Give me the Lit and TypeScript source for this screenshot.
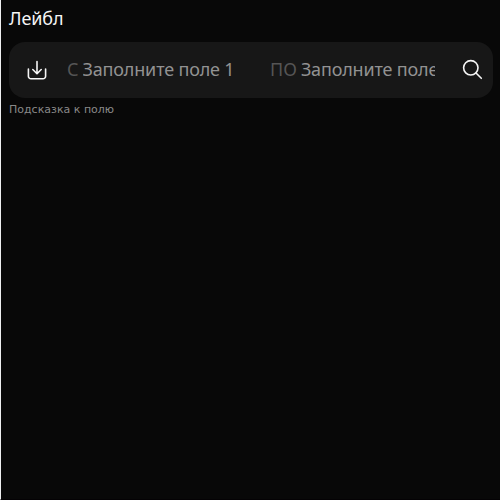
import { LitElement, html, css } from "lit";
import { customElement } from "lit/decorators.js";

@customElement("app-root")
export class AppRoot extends LitElement {
  static styles = css`
    :host {
      display: block;
      box-sizing: border-box;
      height: 500px;
      padding: 7px 7px 0 8px;
      overflow: hidden;
      background: #080808;
      border-left: 1px solid #eeeff0;
      border-bottom: 1px solid #040204;
      font-family: "Noto Sans", sans-serif;
      font-size: 18px;
      line-height: 22px;
      color: #f5f5f5;
    }
    .label { display: block; height: 22px; letter-spacing: -0.1px; }
    .range {
      display: flex;
      align-items: center;
      box-sizing: border-box;
      height: 56px;
      margin-top: 13px;
      padding: 0 8px 0 16px;
      border-radius: 16px;
      background: #171717;
    }
    .icon { display: block; flex: none; width: 24px; height: 24px; fill: none; stroke: #f5f5f5; stroke-width: 1.6; stroke-linecap: round; stroke-linejoin: round; }
    .field { display: flex; gap: 4px; overflow: hidden; white-space: nowrap; box-sizing: border-box; padding-bottom: 2px; }
    .first { width: 168px; margin-left: 18px; }
    .second { width: 165px; margin-left: 35px; }
    .prefix { color: #555555; }
    .value { color: #929292; letter-spacing: -0.17px; flex: 1; min-width: 0; overflow: hidden; }
    .search { margin-left: 26px; margin-right: -1px; }
    .hint { display: block; margin-top: 5px; font: 11px/14px "DejaVu Sans", sans-serif; color: #888888; }
  `;

  render() {
    return html`
      <label class="label">Лейбл</label>
      <div class="range">
        <svg class="icon" viewBox="0 0 24 24">
          <path d="M12 3.5v12M7.8 11.5l4.2 4.2 4.2-4.2M3.4 11v7.2a2.6 2.6 0 0 0 2.6 2.6h12a2.6 2.6 0 0 0 2.6-2.6V11" />
        </svg>
        <div class="field first"><span class="prefix">С</span><span class="value">Заполните поле 1</span></div>
        <div class="field second"><span class="prefix">ПО</span><span class="value">Заполните поле 2</span></div>
        <svg class="icon search" viewBox="0 0 24 24">
          <circle cx="9.8" cy="9.8" r="7.2" /><path d="M15 15l5.3 5.3" />
        </svg>
      </div>
      <span class="hint">Подсказка к полю</span>
    `;
  }
}
